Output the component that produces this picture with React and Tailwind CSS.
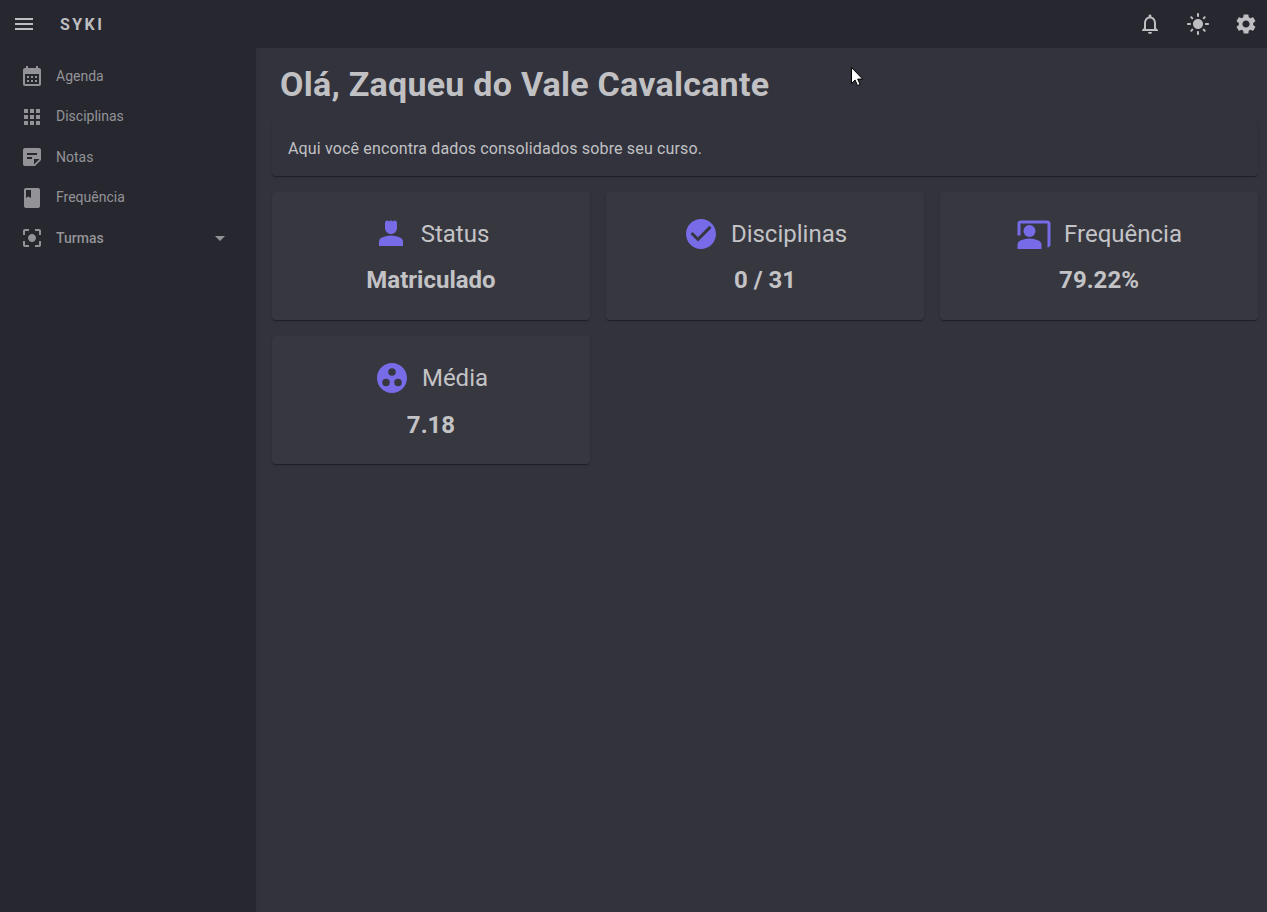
import {
  MdMenu,
  MdCalendarMonth,
  MdApps,
  MdStickyNote2,
  MdBook,
  MdCenterFocusStrong,
  MdArrowDropDown,
  MdNotificationsNone,
  MdLightMode,
  MdSettings,
  MdPerson4,
  MdCheckCircle,
  MdCoPresent,
  MdGroupWork,
} from "react-icons/md";

const links = [
  { label: "Agenda", icon: MdCalendarMonth },
  { label: "Disciplinas", icon: MdApps },
  { label: "Notas", icon: MdStickyNote2 },
  { label: "Frequência", icon: MdBook },
];

const cards = [
  { title: "Status", value: "Matriculado", icon: MdPerson4 },
  { title: "Disciplinas", value: "0 / 31", icon: MdCheckCircle },
  { title: "Frequência", value: "79.22%", icon: MdCoPresent },
  { title: "Média", value: "7.18", icon: MdGroupWork },
];

const paperShadow =
  "rounded shadow-[0_2px_1px_-1px_rgba(0,0,0,0.2),0_1px_1px_0_rgba(0,0,0,0.14),0_1px_3px_0_rgba(0,0,0,0.12)]";

function TopBar() {
  return (
    <header className="relative z-10 flex h-12 shrink-0 items-center bg-[#27272f] pl-3 pr-[9px] text-[#bebec0]">
      <button aria-label="Menu">
        <MdMenu size={24} />
      </button>
      <span className="ml-6 pt-0.5 text-base font-bold tracking-[2.4px]">SYKI</span>
      <div className="ml-auto flex gap-6">
        <MdNotificationsNone size={24} />
        <MdLightMode size={24} />
        <MdSettings size={24} />
      </div>
    </header>
  );
}

function Sidebar() {
  return (
    <nav className="w-64 shrink-0 bg-[#27272f] pt-[8.15px] text-sm text-[#939397] shadow-[0_1px_5px_0_rgba(0,0,0,0.12)]">
      {links.map(({ label, icon: Icon }) => (
        <a key={label} className="flex h-[40.4px] items-center gap-3 px-5">
          <Icon size={24} />
          <span className="pb-[0.7px]">{label}</span>
        </a>
      ))}
      <button className="flex h-[40.4px] w-full items-center gap-3 pl-5 pr-6 font-medium">
        <MdCenterFocusStrong size={24} />
        Turmas
        <MdArrowDropDown size={24} className="ml-auto" />
      </button>
    </nav>
  );
}

function Card({ title, value, icon: Icon }) {
  return (
    <section className={`flex h-32 flex-col items-center bg-[#373740] pt-6 text-2xl text-[#c3c3c6] ${paperShadow}`}>
      <div className="flex h-9 items-center gap-3">
        <Icon size={36} className="text-[#776be7]" />
        <h2>{title}</h2>
      </div>
      <p className="mt-[12.4px] font-bold">{value}</p>
    </section>
  );
}

function Cursor() {
  return (
    <svg className="absolute left-[851px] top-[67px]" width="12" height="20" viewBox="0 0 12 20">
      <path d="M.5.5v16l3.6-3.5 2.4 5.6 2.6-1.1-2.4-5.4h5L.5.5Z" fill="#fff" stroke="#000" strokeWidth="1" />
    </svg>
  );
}

export default function App() {
  return (
    <div className="flex h-screen flex-col overflow-hidden bg-[#32333d] font-['Roboto',sans-serif]">
      <TopBar />
      <div className="flex grow">
        <Sidebar />
        <main className="flex grow flex-col pl-4 pr-[9px] pt-[15px]">
          <h1 className="pl-2 text-[34px] font-bold leading-[42px] tracking-[0.25px] text-[#c1c1c4]">
            Olá, Zaqueu do Vale Cavalcante
          </h1>
          <p className={`mt-[15px] flex h-14 items-center bg-[#32333d] px-4 pt-0.5 text-base tracking-[.00938em] text-[#c1c1c4] ${paperShadow}`}>
            Aqui você encontra dados consolidados sobre seu curso.
          </p>
          <div className="mt-4 grid grid-cols-3 gap-x-4 gap-y-[16.2px]">
            {cards.map((card) => (
              <Card key={card.title} {...card} />
            ))}
          </div>
        </main>
      </div>
      <Cursor />
    </div>
  );
}
